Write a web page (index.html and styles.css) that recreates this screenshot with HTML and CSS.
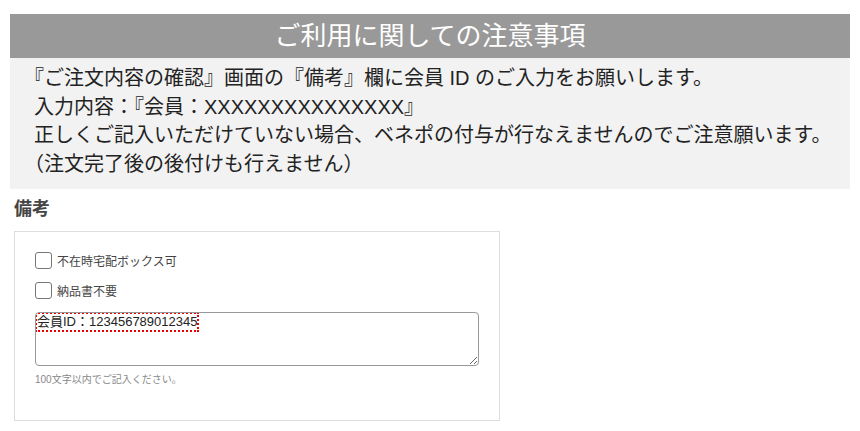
FILE: index.html
```html
<!DOCTYPE html>
<html lang="ja">
<head>
  <meta charset="UTF-8">
  <title>ご利用に関しての注意事項</title>
  <meta name="viewport" content="width=device-width, initial-scale=1">
  <link rel="stylesheet" href="styles.css">
</head>
<body>

  <div class="notice">
    <h2 class="notice-title">ご利用に関しての注意事項</h2>
    <div class="notice-body">
      <p>『ご注文内容の確認』画面の『備考』欄に会員 ID のご入力をお願いします。</p>
      <p>入力内容：『会員：XXXXXXXXXXXXXXX』</p>
      <p>正しくご記入いただけていない場合、ベネポの付与が行なえませんのでご注意願います。</p>
      <p>（注文完了後の後付けも行えません）</p>
    </div>
  </div>

  <div class="remarks">
    <h3 class="remarks-title">備考</h3>
    <div class="remarks-box">
      <label class="check"><input type="checkbox"> 不在時宅配ボックス可</label>
      <label class="check"><input type="checkbox"> 納品書不要</label>
      <div class="memo"><span class="memo-mark">会員ID：123456789012345</span></div>
      <small class="hint">100文字以内でご記入ください。</small>
    </div>
  </div>

</body>
</html>
```

FILE: styles.css
```css
body {
  margin:14px 10px 0;
  font-family:"Liberation Sans", "Noto Sans CJK JP", sans-serif;
  color:#222;
  background:#fff;
}

.notice-title {
  margin:0;
  height:44px;
  line-height:44px;
  background:#999;
  color:#fff;
  font-size:26px;
  font-weight:normal;
  text-align:center;
}

.notice-body {
  background:#f2f2f2;
  padding:6px 0 11px 24px;
  font-size:20px;
  line-height:28.5px;
}
.notice-body p {
  margin:0;
  text-spacing-trim:trim-start;
}

.remarks {
  margin:8px 0 0 4px;
}

.remarks-title {
  margin:0 0 10px;
  font-size:18px;
  line-height:24px;
  color:#444;
}

.remarks-box {
  width:444px;
  border:1px solid #ddd;
  padding:20px 20px 33px;
  display:flex;
  flex-direction:column;
  gap:13px;
}

.check {
  display:flex;
  align-items:center;
  gap:5px;
  height:17px;
  font-size:12px;
  color:#444;
}
.check input {
  -webkit-appearance:none;
  appearance:none;
  margin:0;
  width:17px;
  height:17px;
  border:1px solid #777;
  border-radius:3px;
  background:#fff;
}

.memo {
  height:52px;
  border:1px solid #999;
  border-radius:4px;
  padding:0 0 0 1px;
  font-size:13px;
  color:#222;
  overflow:auto;
  resize:both;
}
.memo-mark {
  display:inline-block;
  margin-top:1px;
  line-height:16px;
  outline:2px dotted #e00;
}

.hint {
  margin-top:-6px;
  font-size:10px;
  line-height:14px;
  color:#888;
}
```
